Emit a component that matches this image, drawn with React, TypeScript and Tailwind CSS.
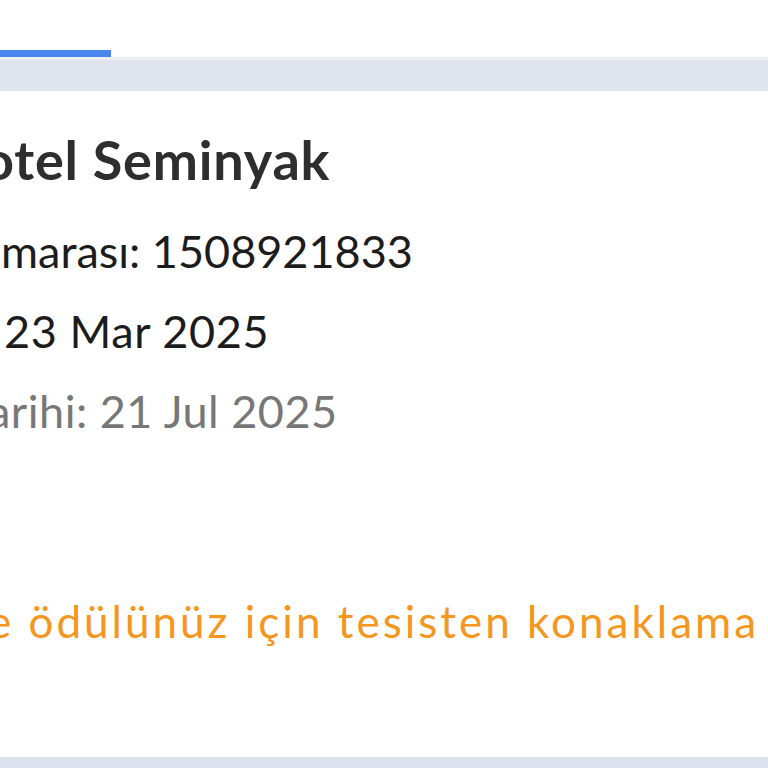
import React from 'react';

export default function App() {
  return (
    <div
      className="w-[768px] h-[768px] overflow-hidden bg-white flex flex-col"
      style={{ fontFamily: 'Lato, "Noto Sans", sans-serif' }}
    >
      {/* tab strip */}
      <div className="h-[57px] shrink-0 flex items-end bg-white">
        <div className="w-[111px] h-[7px] bg-[#4a86ec]" />
      </div>
      <div className="h-[34px] shrink-0 bg-[#dfe4ef] border-t-[3px] border-[#eceef4]" />

      {/* booking card */}
      <div className="h-[666px] shrink-0 bg-white pt-[37px] overflow-hidden whitespace-nowrap">
        <h1 className="-ml-[17px] text-[54px] leading-[64px] font-bold tracking-[0.8px] text-[#2e2e2e]">
          otel Seminyak
        </h1>
        <div className="mt-[19px] flex flex-col text-[45px] leading-[80px]">
          <p className="ml-[1px] text-[#1c1c1c]">marası: 1508921833</p>
          <p className="ml-[4px] tracking-[0.6px] text-[#1c1c1c]">23 Mar 2025</p>
          <p className="-ml-[12px] tracking-[0.5px] text-[#777777]">arihi: 21 Jul 2025</p>
        </div>
        <p className="mt-[130px] -ml-[12px] text-[44px] leading-[80px] tracking-[3px] text-[#f5961e]">
          e ödülünüz için tesisten konaklama
        </p>
      </div>

      <div className="flex-1 bg-[#dde2ef]" />
    </div>
  );
}
